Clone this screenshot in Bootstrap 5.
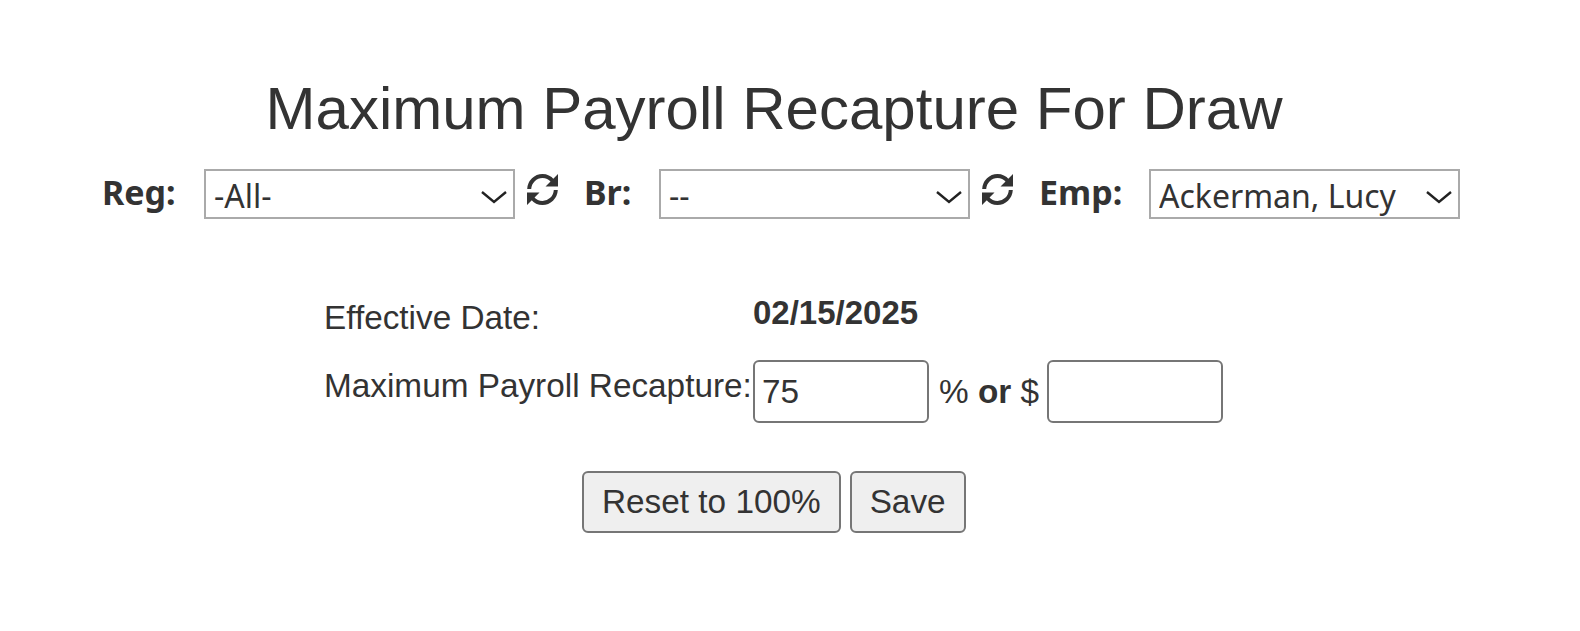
<!DOCTYPE html>
<html lang="en"><head><meta charset="utf-8">
<link href="https://cdn.jsdelivr.net/npm/bootstrap@5.3.0/dist/css/bootstrap.min.css" rel="stylesheet">
<style>
body{font-family:"Liberation Sans",Arial,sans-serif;color:#333;background:#fff;}
.page-wrap{width:1548px;padding-top:70px;}
.page-title{font-size:60px;font-weight:400;line-height:78px;margin:0;text-align:center;color:#333;}
.filter-row{height:50px;margin-top:21px;padding-left:102px;}
.filter-label{font-family:"Noto Sans",sans-serif;font-weight:700;font-size:34px;line-height:46px;color:#333;}
.lab-reg{width:102px;}
.lab-br{width:75px;margin-left:26px;}
.lab-emp{width:110px;margin-left:26px;}
.sel-box{position:relative;width:311px;height:50px;}
.filter-select{font-family:"Noto Sans",sans-serif;font-size:32px;line-height:44px;color:#333;width:100%;height:50px;border:2px solid #aaa;border-radius:0;background:#fff;padding:3px 8px 0;appearance:none;}
.sel-box svg{position:absolute;right:8px;top:22px;pointer-events:none;}
.sync-icon{margin-left:12px;margin-top:4px;flex:none;}
.form-area{margin-left:324px;margin-top:79px;font-size:33.33px;line-height:40px;}
.f-label{width:429px;flex:none;}
.f-val{font-weight:700;font-size:33px;margin-top:-5px;}
.row-two{margin-top:28px;}
.f-controls{margin-top:-6px;}
.f-input{width:176px;height:63px;border:2px solid #767676;border-radius:6px;font-size:33.33px;padding:2px 7px;color:#333;background:#fff;}
.f-sep{margin:0 8px 0 10px;}
.act-row{margin-top:48px;margin-left:582px;gap:9px;}
.act-btn{height:62px;font-size:33.33px;padding:0 18px;background:#efefef;border:2px solid #767676;border-radius:6px;color:#333;}
</style></head><body>
<div class="page-wrap">
<h1 class="page-title">Maximum Payroll Recapture For Draw</h1>
<div class="filter-row d-flex align-items-start">
<span class="filter-label lab-reg">Reg:</span>
<div class="sel-box"><select class="filter-select"><option>-All-</option></select><svg width="26" height="13" viewBox="0 0 26 13"><path d="M1 1l12 10L25 1" fill="none" stroke="#222" stroke-width="2.4"/></svg></div>
<svg class="sync-icon" width="31" height="33" viewBox="0 0 31 33"><g fill="none" stroke="#333" stroke-width="4"><path d="M2.200 16C2.600 8.500 8.500 3 15.500 3c4 0 7.500 1.800 10 4.800"/><path d="M28.800 17c-.4 7.500-6.300 13-13.300 13-4 0-7.500-1.800-10-4.800"/></g><path fill="#333" d="M31 1v12.500H18.500zM0 32V19.500h12.500z"/></svg>
<span class="filter-label lab-br">Br:</span>
<div class="sel-box"><select class="filter-select"><option>--</option></select><svg width="26" height="13" viewBox="0 0 26 13"><path d="M1 1l12 10L25 1" fill="none" stroke="#222" stroke-width="2.4"/></svg></div>
<svg class="sync-icon" width="31" height="33" viewBox="0 0 31 33"><g fill="none" stroke="#333" stroke-width="4"><path d="M2.200 16C2.600 8.500 8.500 3 15.500 3c4 0 7.500 1.800 10 4.800"/><path d="M28.800 17c-.4 7.500-6.300 13-13.300 13-4 0-7.500-1.800-10-4.800"/></g><path fill="#333" d="M31 1v12.500H18.500zM0 32V19.500h12.500z"/></svg>
<span class="filter-label lab-emp">Emp:</span>
<div class="sel-box"><select class="filter-select"><option>Ackerman, Lucy</option></select><svg width="26" height="13" viewBox="0 0 26 13"><path d="M1 1l12 10L25 1" fill="none" stroke="#222" stroke-width="2.4"/></svg></div>
</div>
</div>
<div class="form-area">
<div class="d-flex align-items-start"><span class="f-label">Effective Date:</span><span class="f-val">02/15/2025</span></div>
<div class="d-flex align-items-start row-two"><span class="f-label">Maximum Payroll Recapture:</span>
<div class="d-flex align-items-center f-controls"><input class="f-input" type="text" value="75"><span class="f-sep">% <b>or</b> $</span><input class="f-input" type="text"></div></div>
</div>
<div class="act-row d-flex"><button class="act-btn" type="button">Reset to 100%</button><button class="act-btn" type="button">Save</button></div>
<script src="https://cdn.jsdelivr.net/npm/bootstrap@5.3.0/dist/js/bootstrap.bundle.min.js"></script>
</body></html>
